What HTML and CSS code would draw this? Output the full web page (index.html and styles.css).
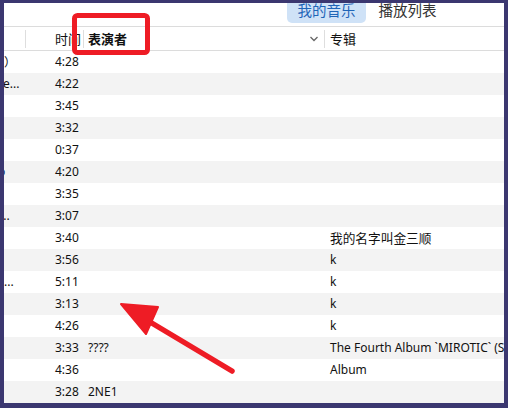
FILE: index.html
```html
<!DOCTYPE html>
<html>
<head>
<meta charset="utf-8">
<link rel="stylesheet" href="styles.css">
</head>
<body>
<div class="frame">
  <div class="tabs">
    <div class="tab active">我的音乐</div>
    <div class="tab">播放列表</div>
  </div>
  <div class="header">
    <div class="hcell c0"><span class="hlabel"></span><i class="sep"></i></div>
    <div class="hcell c1"><span class="hlabel clip">时间</span><i class="sep"></i></div>
    <div class="hcell c2"><span class="hlabel bold">表演者</span><svg class="chev" width="10" height="8" viewBox="0 0 10 8"><polyline points="1.5,2 5,5.5 8.5,2" fill="none" stroke="#666" stroke-width="1.3"/></svg><i class="sep"></i></div>
    <div class="hcell c3"><span class="hlabel">专辑</span></div>
  </div>
  <div class="rows">
    <div class="row"><div class="c0"><span class="frag f1">）</span></div><div class="c1">4:28</div><div class="c2"></div><div class="c3"></div></div>
    <div class="row"><div class="c0"><span class="frag f2">e...</span></div><div class="c1">4:22</div><div class="c2"></div><div class="c3"></div></div>
    <div class="row"><div class="c0"></div><div class="c1">3:45</div><div class="c2"></div><div class="c3"></div></div>
    <div class="row"><div class="c0"></div><div class="c1">3:32</div><div class="c2"></div><div class="c3"></div></div>
    <div class="row"><div class="c0"></div><div class="c1">0:37</div><div class="c2"></div><div class="c3"></div></div>
    <div class="row"><div class="c0"><span class="frag f6">o</span></div><div class="c1">4:20</div><div class="c2"></div><div class="c3"></div></div>
    <div class="row"><div class="c0"></div><div class="c1">3:35</div><div class="c2"></div><div class="c3"></div></div>
    <div class="row"><div class="c0"><span class="frag f8">...</span></div><div class="c1">3:07</div><div class="c2"></div><div class="c3"></div></div>
    <div class="row"><div class="c0"></div><div class="c1">3:40</div><div class="c2"></div><div class="c3 cjk">我的名字叫金三顺</div></div>
    <div class="row"><div class="c0"></div><div class="c1">3:56</div><div class="c2"></div><div class="c3">k</div></div>
    <div class="row"><div class="c0"><span class="frag f11">...</span></div><div class="c1">5:11</div><div class="c2"></div><div class="c3">k</div></div>
    <div class="row"><div class="c0"></div><div class="c1">3:13</div><div class="c2"></div><div class="c3">k</div></div>
    <div class="row"><div class="c0"></div><div class="c1">4:26</div><div class="c2"></div><div class="c3">k</div></div>
    <div class="row"><div class="c0"></div><div class="c1">3:33</div><div class="c2">????</div><div class="c3">The Fourth Album `MIROTIC` (Special Edition)</div></div>
    <div class="row"><div class="c0"></div><div class="c1">4:36</div><div class="c2"></div><div class="c3">Album</div></div>
    <div class="row"><div class="c0"></div><div class="c1">3:28</div><div class="c2">2NE1</div><div class="c3"></div></div>
  </div>
</div>
<svg class="overlay" width="508" height="408" viewBox="0 0 508 408">
  <rect x="74.5" y="15.5" width="73" height="37" rx="3" fill="none" stroke="#ee1c25" stroke-width="5"/>
  <line x1="232" y1="371" x2="140" y2="316" stroke="#ee1c25" stroke-width="5.5" stroke-linecap="round"/>
  <polygon points="121,304 158,307 146,334" fill="#ee1c25" stroke="#ee1c25" stroke-width="2" stroke-linejoin="round"/>
</svg>
</body>
</html>
```
FILE: styles.css
```css
html, body {
  margin: 0;
  padding: 0;
}
body {
  width: 508px;
  height: 408px;
  background: #3b3770;
  position: relative;
  overflow: hidden;
  font-family: "Noto Sans", "Noto Sans CJK SC", sans-serif;
  color: #111;
}
.frame {
  margin: 3px 4px 0 4px;
  width: 500px;
  height: 400px;
  background: #fff;
  overflow: hidden;
}
.tabs {
  height: 24px;
  border-bottom: 1px solid #dcdcdc;
  box-sizing: border-box;
  display: flex;
  align-items: flex-start;
  padding-left: 283px;
  font-family: "Noto Sans CJK SC", sans-serif;
  font-size: 14.5px;
  line-height: 14px;
}
.tab {
  height: 20px;
  padding: 0 10.5px;
  color: #333;
  box-sizing: border-box;
  white-space: nowrap;
}
.tab.active {
  background: #cfe2f7;
  color: #1f65b7;
  border-radius: 0 0 5px 5px;
  margin-right: 2px;
}
.header {
  height: 24px;
  border-bottom: 1px solid #dcdcdc;
  box-sizing: border-box;
  display: grid;
  grid-template-columns: 22px 58px 241px 1fr;
  font-family: "Noto Sans CJK SC", sans-serif;
  font-size: 13px;
}
.hcell {
  display: flex;
  align-items: center;
  min-width: 0;
}
.hlabel {
  flex: 1;
  white-space: nowrap;
  overflow: hidden;
  line-height: 18px;
}
.hlabel.bold { font-weight: bold; }
.sep {
  width: 1px;
  height: 18px;
  background: #dedede;
  margin-top: 1px;
}
.chev { margin-right: 5px; margin-top: 1px; }
.header .c1 .hlabel { padding-left: 29px; padding-right: 2px; }
.header .c2 .hlabel { padding-left: 4px; }
.header .c3 .hlabel { padding-left: 5px; }
.rows {
  display: flex;
  flex-direction: column;
}
.row {
  height: 22px;
  display: grid;
  grid-template-columns: 22px 58px 241px 1fr;
  align-items: center;
  font-size: 12px;
  line-height: 22px;
  white-space: nowrap;
}
.row:nth-child(even) { background: #f3f3f3; }
.row > div { overflow: hidden; min-width: 0; }
.row .c1 { padding-left: 29px; }
.row .c2 { padding-left: 4px; }
.row .c3 { padding-left: 5px; }
.row .cjk { font-family: "Noto Sans CJK SC", sans-serif; font-size: 12.7px; }
.frag { display: inline-block; color: #111; }
.f1 { margin-left: 0; font-family: "Noto Sans CJK SC", sans-serif; }
.f2 { margin-left: -1px; }
.f6 { margin-left: -6px; }
.f8 { margin-left: -4px; }
.f11 { margin-left: 0; }
.overlay {
  position: absolute;
  left: 0;
  top: 0;
  pointer-events: none;
}
```
